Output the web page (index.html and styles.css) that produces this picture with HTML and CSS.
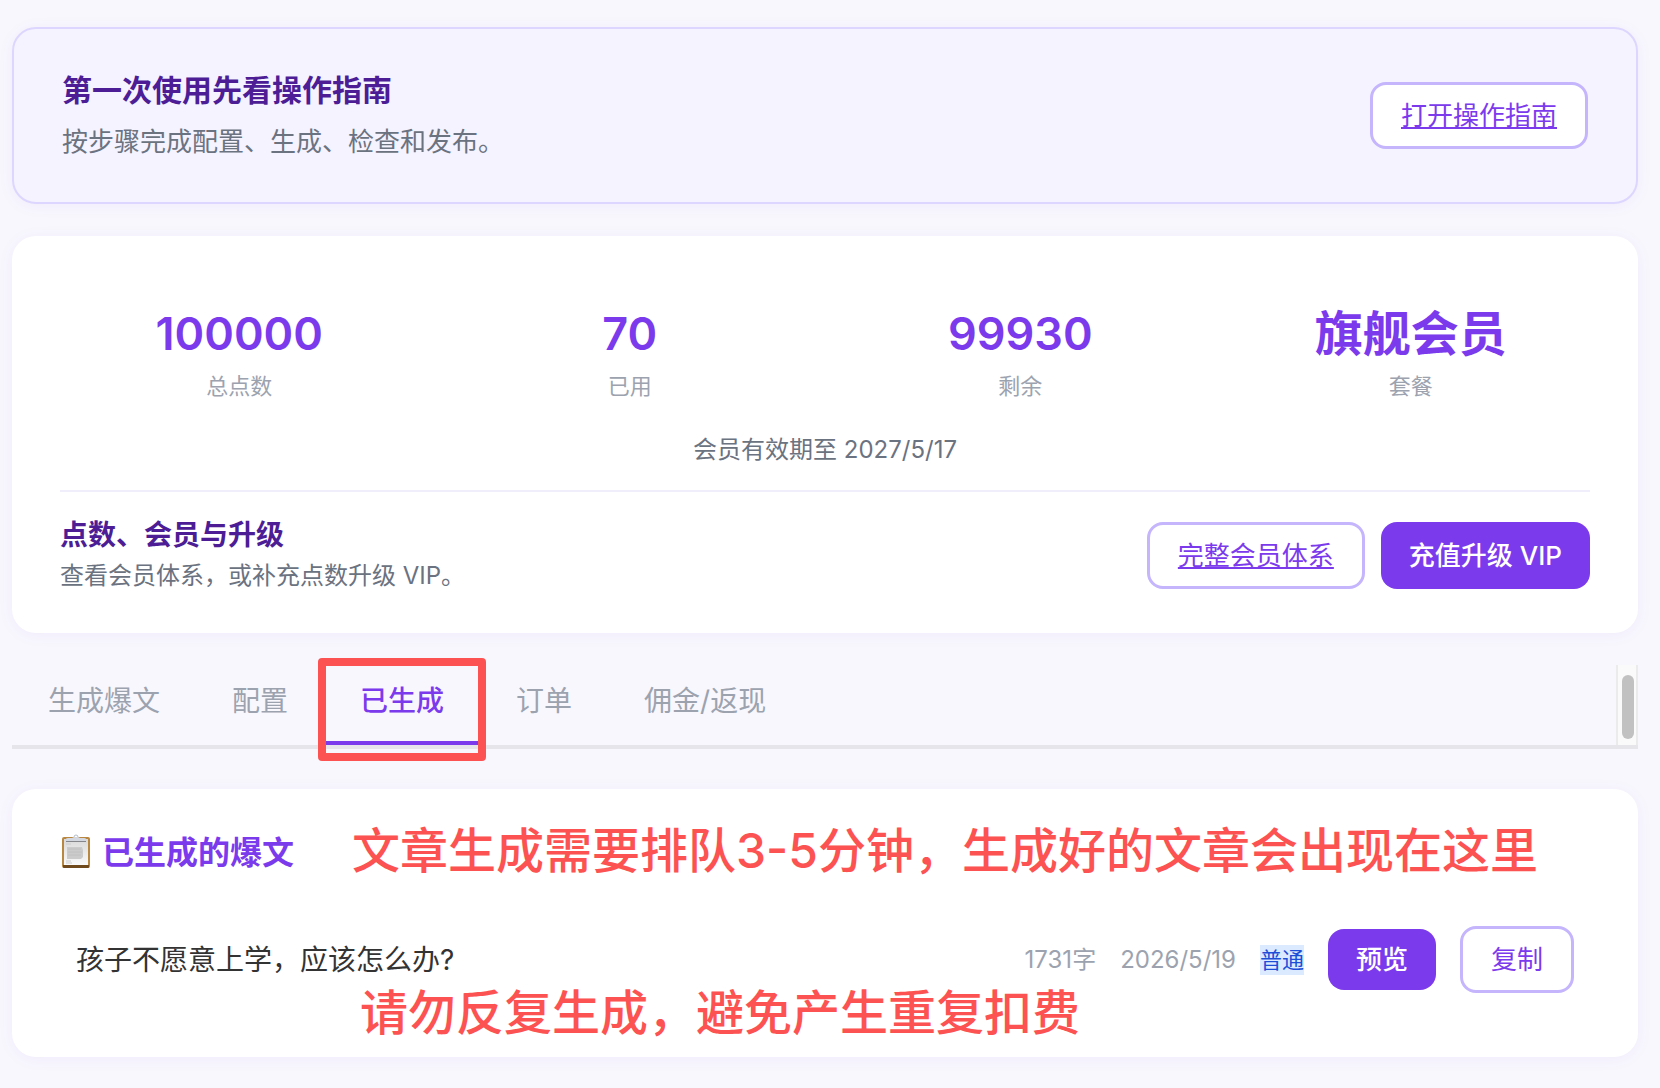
FILE: index.html
```html
<!DOCTYPE html>
<html lang="zh-CN">
<head>
    <meta charset="UTF-8">
    <meta name="viewport" content="width=device-width, initial-scale=1.0">
    <title>已生成的爆文</title>
    <link rel="stylesheet" href="styles.css">
</head>
<body>
    <main class="page">
        <section class="card guide">
            <div class="guide-text">
                <h2>第一次使用先看操作指南</h2>
                <p>按步骤完成配置、生成、检查和发布。</p>
            </div>
            <a href="#guide" class="btn btn-outline">打开操作指南</a>
        </section>

        <section class="card account">
            <div class="stats">
                <div class="stat">
                    <div class="stat-value number">100000</div>
                    <div class="stat-label">总点数</div>
                </div>
                <div class="stat">
                    <div class="stat-value number">70</div>
                    <div class="stat-label">已用</div>
                </div>
                <div class="stat">
                    <div class="stat-value number">99930</div>
                    <div class="stat-label">剩余</div>
                </div>
                <div class="stat">
                    <div class="stat-value">旗舰会员</div>
                    <div class="stat-label">套餐</div>
                </div>
            </div>
            <p class="expiry">会员有效期至 2027/5/17</p>
            <div class="upgrade">
                <div class="upgrade-text">
                    <h3>点数、会员与升级</h3>
                    <p>查看会员体系，或补充点数升级 VIP。</p>
                </div>
                <div class="actions">
                    <a href="#plans" class="btn btn-outline">完整会员体系</a>
                    <button type="button" class="btn btn-primary">充值升级 VIP</button>
                </div>
            </div>
        </section>

        <nav class="tabs">
            <button type="button" class="tab">生成爆文</button>
            <button type="button" class="tab">配置</button>
            <button type="button" class="tab active">已生成</button>
            <button type="button" class="tab">订单</button>
            <button type="button" class="tab">佣金/返现</button>
            <div class="scroll-track"><div class="scroll-thumb"></div></div>
        </nav>

        <section class="card articles">
            <div class="articles-header">
                <svg class="clipboard" viewBox="0 0 32 36" aria-hidden="true">
                    <defs>
                        <linearGradient id="paper" x1="0" y1="0" x2="0" y2="1">
                            <stop offset="0" stop-color="#d9d9d9"/>
                            <stop offset="1" stop-color="#fafafa"/>
                        </linearGradient>
                    </defs>
                    <rect x="2" y="4" width="28" height="31" rx="2" fill="#b9873f"/>
                    <path d="M3 32h26v2q0 1-1 1H4q-1 0-1-1z" fill="#70491d"/>
                    <rect x="4" y="6" width="24" height="26" fill="url(#paper)"/>
                    <path d="M6 11h5M6 28h5M6 30h6" stroke="#cccccc"/>
                    <path d="M7 14h15l1 3v7l-2 2H7z" fill="#cbcbcb"/>
                    <path d="M8 16h13M8 19h14M8 22h13" stroke="#c0c0c0"/>
                    <path d="M14 4a2 2 0 0 1 4 0" fill="none" stroke="#b4bcc9"/>
                    <path d="M6 8V6q0-1 2-1h4l2-1h4l2 1h4q2 0 2 1v2z" fill="#d3d7df"/>
                    <path d="M6 8h20v1H6z" fill="#85868c"/>
                </svg>
                <h2>已生成的爆文</h2>
                <p class="note">文章生成需要排队3-5分钟，生成好的文章会出现在这里</p>
            </div>
            <div class="article">
                <span class="article-title">孩子不愿意上学，应该怎么办?</span>
                <span class="meta">1731字</span>
                <span class="meta">2026/5/19</span>
                <span class="badge">普通</span>
                <button type="button" class="btn btn-primary">预览</button>
                <button type="button" class="btn btn-outline">复制</button>
            </div>
            <p class="note note-repeat">请勿反复生成，避免产生重复扣费</p>
        </section>
    </main>
</body>
</html>
```
FILE: styles.css
```css
:root {
    --purple: #7c3aed;
    --dark-purple: #4c1d95;
    --light-purple: #c4b5fd;
    --gray: #6b7280;
    --light-gray: #9ca3af;
    --red: #fc5352;
}

* {
    margin: 0;
    padding: 0;
    box-sizing: border-box;
}

body {
    background: #f8f7fd;
    color: #333;
    font-family: Inter, "Noto Sans CJK SC", sans-serif;
    font-size: 24px;
    line-height: 36px;
}

button {
    font-family: inherit;
    cursor: pointer;
}

.page {
    padding: 27px 22px 31px 12px;
}

.card {
    background: white;
    border-radius: 24px;
    padding: 40px 48px;
    box-shadow: 0 2px 16px rgba(124, 58, 237, 0.06);
}

/* Buttons */
.btn {
    display: inline-block;
    padding: 14px 28px;
    border: none;
    border-radius: 16px;
    font-size: 26px;
    line-height: 33px;
    white-space: nowrap;
}

.btn-primary {
    background: var(--purple);
    color: white;
    font-weight: 500;
}

.btn-outline {
    background: white;
    color: var(--purple);
    border: 3px solid var(--light-purple);
}

/* Guide */
.guide {
    display: flex;
    align-items: center;
    justify-content: space-between;
    background: #f5f3ff;
    border: 2px solid #ddd6fe;
    margin-bottom: 32px;
}

.guide-text h2 {
    color: var(--dark-purple);
    font-size: 30px;
    line-height: 42px;
    margin-bottom: 11px;
}

.guide-text p {
    color: var(--gray);
    font-size: 26px;
    line-height: 40px;
}

/* Account */
.account {
    padding-top: 64px;
    padding-bottom: 37px;
    margin-bottom: 32px;
}

.stats {
    display: grid;
    grid-template-columns: repeat(4, 1fr);
    gap: 32px;
    text-align: center;
}

.stat-value {
    color: var(--purple);
    font-size: 48px;
    font-weight: 700;
    line-height: 68px;
}

.stat-value.number {
    font-size: 45px;
    font-weight: 600;
}

.stat-label {
    color: var(--light-gray);
    font-size: 22px;
    line-height: 36px;
}

.expiry {
    color: var(--gray);
    text-align: center;
    margin: 28px 0 22px;
}

.upgrade {
    display: flex;
    align-items: center;
    justify-content: space-between;
    border-top: 2px solid #f0eefb;
    padding-top: 22px;
}

.upgrade-text h3 {
    color: var(--dark-purple);
    font-size: 28px;
    line-height: 42px;
}

.upgrade-text p {
    color: var(--gray);
    line-height: 40px;
}

.actions {
    display: flex;
    gap: 16px;
}

/* Tabs */
.tabs {
    display: flex;
    border-bottom: 4px solid #e5e5ea;
    margin-bottom: 40px;
}

.tab {
    position: relative;
    height: 80px;
    padding: 0 36px 8px;
    border: none;
    border-bottom: 4px solid transparent;
    background: none;
    color: var(--light-gray);
    font-size: 28px;
}

.tab.active {
    color: var(--purple);
    border-bottom-color: var(--purple);
    font-weight: 500;
}

.tab.active::after {
    content: "";
    position: absolute;
    inset: -7px -6px -20px;
    border: 8px solid var(--red);
    border-radius: 4px;
}

.scroll-track {
    width: 22px;
    margin-left: auto;
    padding: 10px 4px 6px;
    background: #fafafa;
    border: solid #ebebeb;
    border-width: 0 2px;
}

.scroll-thumb {
    width: 12px;
    height: 64px;
    border-radius: 6px;
    background: #c1c1c1;
}

/* Articles */
.articles {
    position: relative;
    padding-bottom: 48px;
}

.articles-header {
    display: flex;
    align-items: flex-start;
    margin-bottom: 33px;
}

.articles-header h2 {
    color: var(--purple);
    font-size: 32px;
    line-height: 48px;
    margin-right: 58px;
    white-space: nowrap;
}

.clipboard {
    width: 32px;
    height: 36px;
    margin: 4px 10px 0 0;
}

.article {
    display: flex;
    align-items: center;
    gap: 24px;
    padding: 16px;
}

.article-title {
    flex: 1;
    font-size: 28px;
}

.meta {
    color: var(--light-gray);
}

.badge {
    background: #dbeafe;
    color: #1d4ed8;
    font-size: 22px;
    line-height: 30px;
}

.note {
    color: var(--red);
    font-size: 48px;
    font-weight: 500;
    line-height: 44px;
    white-space: nowrap;
}

/* Sits over the bottom of the article list */
.note-repeat {
    position: absolute;
    left: 348px;
    bottom: 22px;
}
```
